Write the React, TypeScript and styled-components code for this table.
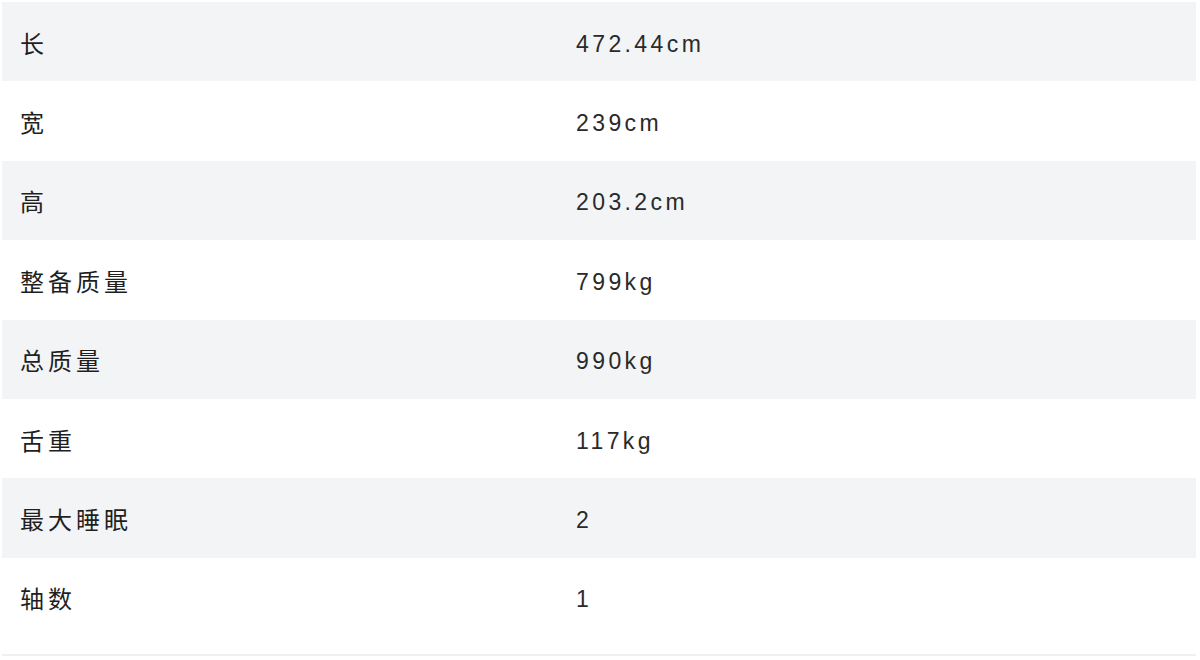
import React from 'react';
import styled, { createGlobalStyle } from 'styled-components';

const GlobalStyle = createGlobalStyle`
  html, body {
    margin: 0;
    padding: 0;
    background: #ffffff;
  }
`;

const Page = styled.div`
  width: 1200px;
  height: 660px;
  padding: 2px 4px 0 2px;
  box-sizing: border-box;
  font-family: 'Noto Sans CJK SC', 'Liberation Sans', sans-serif;
  color: #1f1f1f;
`;

const SpecTable = styled.div`
  display: flex;
  flex-direction: column;
  padding-bottom: 17px;
  border-bottom: 2px solid #f0f0f0;
`;

const Row = styled.div<{ $shaded: boolean }>`
  display: grid;
  grid-template-columns: 556px 1fr;
  align-items: center;
  height: 79.4px;
  padding-left: 18px;
  background: ${(p) => (p.$shaded ? '#f3f4f6' : '#ffffff')};
`;

const Label = styled.div`
  font-size: 24px;
  font-weight: 400;
  letter-spacing: 4px;
  line-height: 1;
  margin-top: 2px;
`;

const Value = styled.div`
  font-family: 'Liberation Sans', 'Noto Sans CJK SC', sans-serif;
  font-size: 23px;
  letter-spacing: 3.4px;
  line-height: 1;
  margin-top: 5px;
  color: #2a2a2a;
`;

const specs: [string, string][] = [
  ['长', '472.44cm'],
  ['宽', '239cm'],
  ['高', '203.2cm'],
  ['整备质量', '799kg'],
  ['总质量', '990kg'],
  ['舌重', '117kg'],
  ['最大睡眠', '2'],
  ['轴数', '1'],
];

const App: React.FC = () => {
  return (
    <Page>
      <GlobalStyle />
      <SpecTable>
        {specs.map(([label, value], i) => (
          <Row key={label} $shaded={i % 2 === 0}>
            <Label>{label}</Label>
            <Value>{value}</Value>
          </Row>
        ))}
      </SpecTable>
    </Page>
  );
};

export default App;
